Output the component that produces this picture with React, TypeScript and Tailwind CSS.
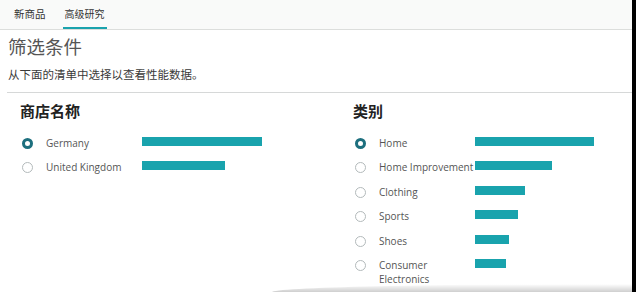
import React from 'react';

interface Option {
    label: string;
    value: number;
    selected?: boolean;
}

const stores: Option[] = [
    { label: 'Germany', value: 120, selected: true },
    { label: 'United Kingdom', value: 83 },
];

const categories: Option[] = [
    { label: 'Home', value: 119, selected: true },
    { label: 'Home Improvement', value: 77 },
    { label: 'Clothing', value: 50 },
    { label: 'Sports', value: 43 },
    { label: 'Shoes', value: 34 },
    { label: 'Consumer Electronics', value: 31 },
];

const font = { fontFamily: '"Open Sans", "Noto Sans CJK SC", sans-serif' };

function Radio({ selected }: { selected?: boolean }) {
    return selected ? (
        <span className="mt-[2px] ml-[2px] h-[11px] w-[11px] shrink-0 rounded-full border-[3px] border-[#1d6f7e] bg-white" />
    ) : (
        <span className="mt-[2px] ml-[2px] h-[11px] w-[11px] shrink-0 rounded-full border border-[#b3babb] bg-white" />
    );
}

function OptionList({ title, options }: { title: string; options: Option[] }) {
    return (
        <div className="flex flex-col">
            <h2 className="text-[15px] font-bold leading-[20px] text-[#222]">{title}</h2>
            <div className="mt-[15px] flex flex-col">
                {options.map((o) => (
                    <div key={o.label} className="flex h-[24.4px] items-start">
                        <Radio selected={o.selected} />
                        <span className="ml-[13px] w-[96px] shrink-0 text-[10px] leading-[14px] text-[#555]">{o.label}</span>
                        <span className="mt-[1px] h-[9px] bg-[#19a3ad]" style={{ width: o.value }} />
                    </div>
                ))}
            </div>
        </div>
    );
}

export default function App() {
    return (
        <div className="flex h-[292px] w-[636px] overflow-hidden bg-black" style={font}>
            <div className="relative flex h-full w-[632px] flex-col overflow-hidden bg-white">
                {/* Tabs */}
                <div className="flex h-[30px] shrink-0 items-end gap-[16px] border-b border-[#dcdedc] bg-[#f9faf9] pl-[13px]">
                    <div className="flex h-[29px] items-center px-[1px] text-[10.5px] text-[#333]">新商品</div>
                    <div className="flex h-[29px] items-center border-b-2 border-[#1aa3ad] px-[2px] pt-[2px] text-[10px] text-[#333]">高级研究</div>
                </div>

                <h1 className="mt-[5px] pl-[8px] text-[18.5px] leading-[24px] text-[#555]">筛选条件</h1>
                <p className="mt-[8px] pl-[8px] text-[11.5px] leading-[16px] text-[#3a3a3a]">从下面的清单中选择以查看性能数据。</p>
                <div className="mt-[9px] ml-[7px] h-px bg-[#d6d8d8]" />

                <div className="mt-[8px] grid grid-cols-[333px_1fr] pl-[20px]">
                    <OptionList title="商店名称" options={stores} />
                    <OptionList title="类别" options={categories} />
                </div>

                {/* bottom edge shading from the capture */}
                <div className="pointer-events-none absolute bottom-0 right-0 h-[8px] w-[360px] rounded-tl-[100%] bg-gradient-to-b from-transparent to-[#cfcfcf]" />
            </div>
        </div>
    );
}
